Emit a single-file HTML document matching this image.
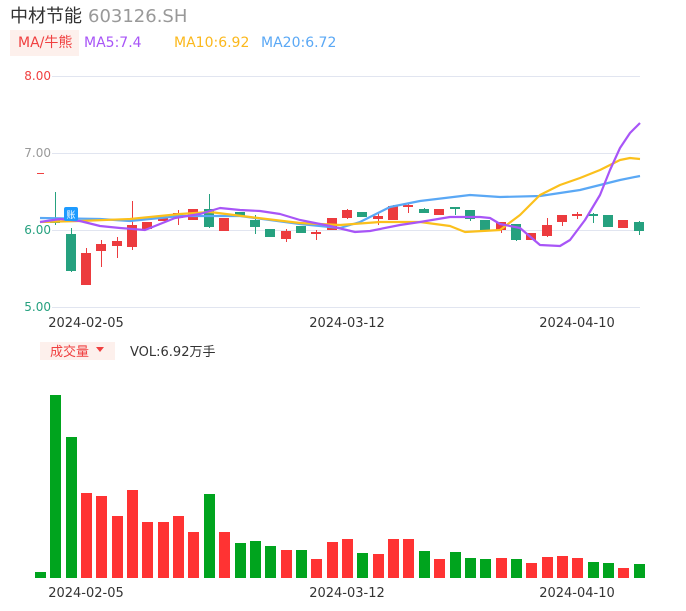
<!DOCTYPE html>
<html><head><meta charset="utf-8"><style>
body{margin:0;width:686px;height:606px;background:#fff;overflow:hidden;font-family:"Liberation Sans","DejaVu Sans","Noto Sans CJK SC",sans-serif}
svg text{font-family:"DejaVu Sans","Noto Sans CJK SC",sans-serif}
</style></head><body>
<svg width="686" height="606" xmlns="http://www.w3.org/2000/svg">
<text x="10" y="22" font-size="18" fill="#333">中材节能</text>
<text x="88" y="22" font-size="18" fill="#999">603126.SH</text>
<rect x="10" y="30" width="69" height="26" fill="#fdf0ec"/>
<text x="18" y="47" font-size="14" fill="#f04040">MA/牛熊</text>
<text x="84" y="47" font-size="14" fill="#a855f7">MA5:7.4</text>
<text x="174" y="47" font-size="14" fill="#fbb81c">MA10:6.92</text>
<text x="261" y="47" font-size="14" fill="#5aa8f5">MA20:6.72</text>
<g stroke="#e1e5f0" stroke-width="1">
<line x1="52" y1="76.5" x2="640" y2="76.5"/><line x1="52" y1="153.5" x2="640" y2="153.5"/>
<line x1="52" y1="230.5" x2="640" y2="230.5"/><line x1="52" y1="307.5" x2="640" y2="307.5"/>
</g>
<g font-size="12" text-anchor="end">
<text x="51" y="80" fill="#f04040">8.00</text>
<text x="51" y="157" fill="#999">7.00</text>
<text x="51" y="234" fill="#26a17f">6.00</text>
<text x="51" y="311" fill="#26a17f">5.00</text>
</g>
<line x1="37" y1="173.5" x2="44" y2="173.5" stroke="#f04040"/>
<g id="c"></g>
<g fill="none" stroke-width="2.2" stroke-linejoin="round">
<polyline stroke="#5aa8f5" points="40,218 100,219 130,221 180,216 240,216 300,224 340,228 360,222 390,207 420,201 470,195 500,197 540,196 580,190 620,180 640,176"/>
<polyline stroke="#fbc01c" points="40,222 80,221 130,219 180,214 210,212 250,217 300,223 340,225 380,222 420,222 450,226 465,232 500,230 520,215 540,195 560,185 580,178 600,170 620,160 630,158 640,159"/>
<polyline stroke="#a855f7" points="40,222 60,219 80,221 100,226 120,228 145,230 175,218 200,214 220,208 240,210 260,211 280,214 300,220 330,226 355,232 370,231 400,225 420,222 450,217 480,217 490,218 500,224 520,228 540,245 560,246 570,240 585,220 600,195 610,170 620,148 630,133 640,123"/>
</g>
<rect x="64" y="207" width="14" height="14" rx="2" fill="#1e9bff"/>
<text x="71" y="218" font-size="9" fill="#fff" text-anchor="middle">账</text>
<g font-size="13" fill="#333" text-anchor="middle">
<text x="86" y="327">2024-02-05</text><text x="347" y="327">2024-03-12</text><text x="577" y="327">2024-04-10</text>
<text x="86" y="597">2024-02-05</text><text x="347" y="597">2024-03-12</text><text x="577" y="597">2024-04-10</text>
</g>
<rect x="40" y="342" width="75" height="18" fill="#fdf0ec"/>
<text x="50" y="356" font-size="13" fill="#f04040">成交量</text>
<path d="M96,347 L104,347 L100,352 Z" fill="#f04040"/>
<text x="130" y="356" font-size="13" fill="#333">VOL:6.92万手</text>
<g id="v"></g>
</svg>
<script>
var R="#ec3b3e",G="#26a17f",VG="#00a41e";
var C=[[55,'g',220,223,192,225],[71,'g',234,271,228,272],[86,'r',253,285,248,285],[101,'r',244,251,240,267],[117,'r',241,246,237,258],[132,'r',225,247,201,250],[147,'r',222,229,222,229],[163,'r',217,221,217,221],[178,'r',213,218,210,225],[193,'r',209,220,209,220],[209,'g',209,227,194,228],[224,'r',218,231,218,231],[240,'g',212,217,212,217],[255,'g',220,227,215,234],[270,'g',229,237,229,237],[286,'r',231,239,229,242],[301,'g',226,233,226,233],[316,'r',232,234,230,240],[332,'r',218,230,218,230],[347,'r',210,218,209,219],[362,'g',212,217,212,217],[378,'r',216,219,212,225],[393,'r',206,220,205,220],[408,'r',205,207,204,213],[424,'g',209,213,208,213],[439,'r',209,215,209,215],[455,'g',207,209,207,215],[470,'g',210,219,210,221],[485,'g',220,230,220,230],[501,'r',222,230,222,233],[516,'g',224,240,224,241],[531,'r',233,240,233,240],[547,'r',225,236,218,237],[562,'r',215,222,215,226],[577,'r',214,216,212,219],[593,'g',214,216,213,223],[608,'g',215,227,215,227],[623,'r',220,228,220,228],[639,'g',222,231,221,235]];
var s='';C.forEach(function(c){var col=c[1]=='r'?R:G;s+='<line x1="'+c[0]+'.5" x2="'+c[0]+'.5" y1="'+c[4]+'" y2="'+c[5]+'" stroke="'+col+'"/><rect x="'+(c[0]-5)+'" y="'+c[2]+'" width="10" height="'+Math.max(2,c[3]-c[2])+'" fill="'+col+'"/>';});
document.getElementById('c').innerHTML=s;
var V=[[40,'g',572],[55,'g',395],[71,'g',437],[86,'r',493],[101,'r',496],[117,'r',516],[132,'r',490],[147,'r',522],[163,'r',522],[178,'r',516],[193,'r',532],[209,'g',494],[224,'r',532],[240,'g',543],[255,'g',541],[270,'g',546],[286,'r',550],[301,'g',550],[316,'r',559],[332,'r',542],[347,'r',539],[362,'g',553],[378,'r',554],[393,'r',539],[408,'r',539],[424,'g',551],[439,'r',559],[455,'g',552],[470,'g',558],[485,'g',559],[501,'r',558],[516,'g',559],[531,'r',563],[547,'r',557],[562,'r',556],[577,'r',558],[593,'g',562],[608,'g',563],[623,'r',568],[639,'g',564]];
s='';V.forEach(function(v){s+='<rect x="'+(v[0]-5)+'" y="'+v[2]+'" width="11" height="'+(578-v[2])+'" fill="'+(v[1]=='r'?'#ff3333':VG)+'"/>';});
document.getElementById('v').innerHTML=s;
</script>
</body></html>
